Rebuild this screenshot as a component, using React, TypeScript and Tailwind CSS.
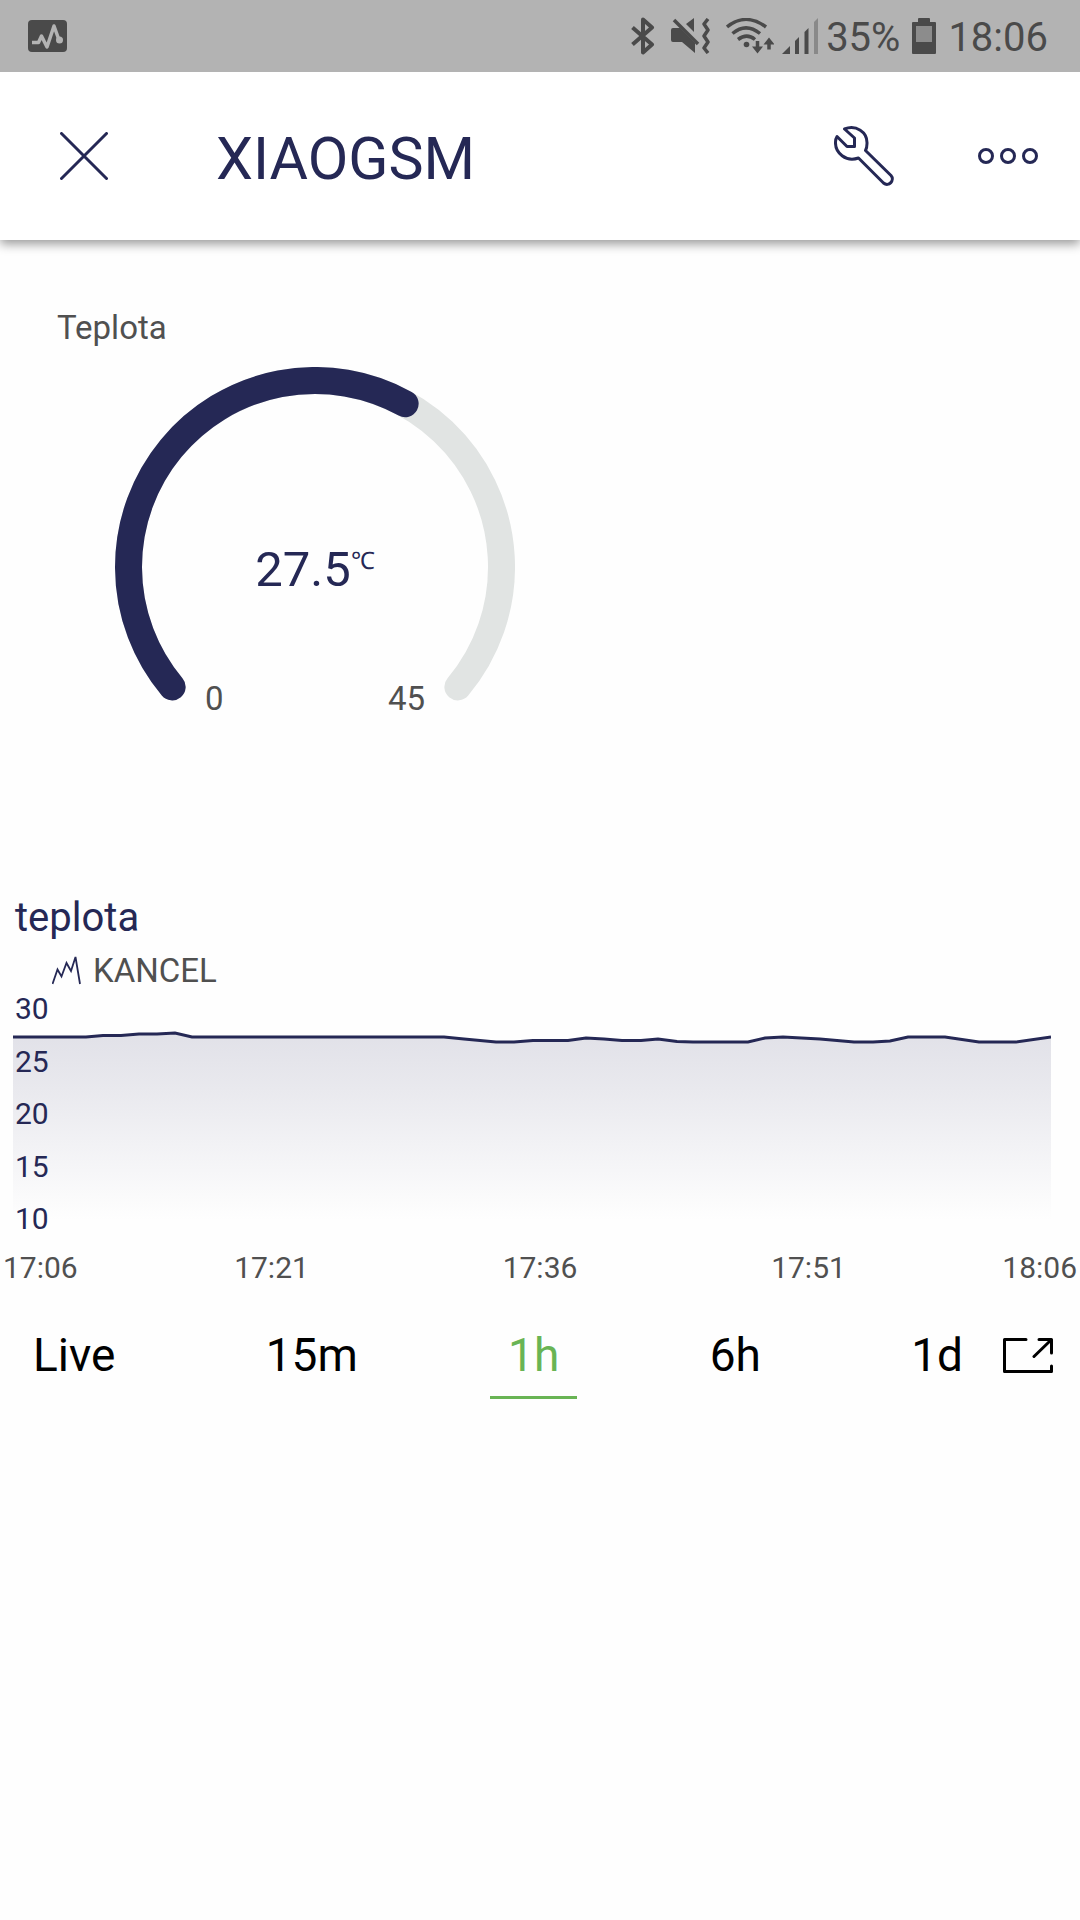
import { useState } from 'react';

const ranges = ['Live', '15m', '1h', '6h', '1d'];

const scale = [30, 25, 20, 15, 10];

// x, y pairs of the last hour of readings
const points = [
  [0, 46], [73, 46], [90, 44.6], [108, 44.6], [126, 43], [144, 43], [162, 42], [179, 46],
  [431, 46], [451, 48], [483, 51], [501, 51], [520, 49.5], [555, 49.5], [573, 47], [591, 48],
  [609, 49.5], [628, 49.5], [645, 48], [664, 50.5], [680, 51], [735, 51], [752, 47], [770, 46],
  [807, 48], [841, 51], [860, 51], [877, 50], [895, 46], [932, 46], [966, 51], [1003, 51],
  [1038, 46],
];

const line = points.map(([x, y]) => `${x},${y}`).join(' ');

const StatusBar = () => (
  <div className="relative z-10 flex h-[72px] items-center justify-between bg-[#b3b3b3] pl-7 pr-8 text-[#4a4a4a]">
    <svg className="h-8 w-[39px]" viewBox="0 0 39 32" fill="none">
      <rect width="39" height="32" rx="4" fill="currentColor" />
      <path d="M4 22.500h6.500l3-6.500 5.500 11 7-21 5 14" stroke="#b3b3b3" strokeWidth="3.500" strokeLinejoin="round" />
      <circle cx="31.500" cy="20" r="3.500" fill="#b3b3b3" />
    </svg>
    <div className="flex items-center">
      <svg className="h-[38px] w-6" viewBox="0 0 24 38" fill="none" stroke="currentColor" strokeWidth="4" strokeLinejoin="round">
        <path d="M1.500 10.500 21 27.500 12 35.500V2.500L21 10.500 1.500 27.500" />
      </svg>
      <svg className="ml-4 h-9 w-[39px]" viewBox="0 0 39 36" fill="currentColor">
        <path d="M2 10h7l15 15v10L11 24H2a2 2 0 0 1-2-2V12a2 2 0 0 1 2-2ZM15 6l8-6v14Z" />
        <path d="m3 2 24 24" fill="none" stroke="currentColor" strokeWidth="3.500" />
        <path d="m37 1-4 5 4 6-4 6 4 6-4 6 4 5" fill="none" stroke="currentColor" strokeWidth="3.500" strokeLinejoin="round" />
      </svg>
      <svg className="ml-4 h-9 w-12" viewBox="0 0 48 36" fill="none" stroke="currentColor" strokeWidth="3.500">
        <path d="M1 9C13-1 27-1 40 9M6.500 15.500c9-7.500 18-7.500 27.500 0M12 21.500c6-4.500 11.500-4.500 17 0" />
        <circle cx="20.500" cy="26.500" r="2.800" fill="currentColor" stroke="none" />
        <path d="M31.500 23v9M43 31.500V23" strokeWidth="3.500" />
        <path d="M26 28.500h11l-5.500 7ZM37.500 26.500h11l-5.500-7Z" fill="currentColor" stroke="none" />
      </svg>
      <svg className="ml-2 h-9 w-9" viewBox="0 0 36 36" fill="currentColor">
        <path d="M0 36 8 28v8ZM13 23l4-4v17h-4ZM22.500 14l4-4v26h-4Z" />
        <path d="m32 4 4-4v36h-4Z" opacity=".4" />
      </svg>
      <span className="ml-2 pt-1 text-[40px] leading-[48px]">35%</span>
      <svg className="ml-3 h-9 w-6" viewBox="0 0 24 36" fill="currentColor">
        <path d="M7 0h10a1 1 0 0 1 1 1v3h5a1 1 0 0 1 1 1v30a1 1 0 0 1-1 1H1a1 1 0 0 1-1-1V5a1 1 0 0 1 1-1h5V1a1 1 0 0 1 1-1Z" />
        <path d="M4 8h16v16H4Z" fill="#8c8c8c" />
      </svg>
      <span className="ml-3 pt-1 text-[40px] leading-[48px]">18:06</span>
    </div>
  </div>
);

const Header = () => (
  <header className="flex h-[168px] items-center bg-white pl-[60px] pr-10 text-[#252855] shadow-[0_4px_10px_rgba(0,0,0,0.4)]">
    <button type="button" aria-label="Close">
      <svg className="h-12 w-12" viewBox="0 0 48 48" fill="none" stroke="currentColor" strokeWidth="3" strokeLinecap="round">
        <path d="m1.500 1.500 45 45M46.500 1.500l-45 45" />
      </svg>
    </button>
    <h1 className="ml-[108px] flex-1 pt-[6px] text-[59px] leading-[72px]">XIAOGSM</h1>
    <button type="button" aria-label="Settings">
      <svg className="h-[60px] w-[60px]" viewBox="0 0 60 60" fill="none" stroke="currentColor" strokeWidth="3" strokeLinejoin="round">
        <path d="M10.500 3C22-1.500 33.500 6 33 17.500c0 2.500-.5 5-1.500 7L57 49.500c4 4.500-2 12-7.500 7.500L24.500 32C12 36.500 1 27 1.500 16c0-2 .5-4 1.500-5.500l10 10h7.500V12Z" />
      </svg>
    </button>
    <button type="button" aria-label="More" className="ml-[84px]">
      <svg className="h-[60px] w-[62px]" viewBox="0 0 62 60" fill="none" stroke="currentColor" strokeWidth="3">
        <circle cx="8" cy="30" r="6.500" />
        <circle cx="30" cy="30" r="6.500" />
        <circle cx="52" cy="30" r="6.500" />
      </svg>
    </button>
  </header>
);

const Gauge = () => (
  <section className="px-[57px] pt-[68px]">
    <h2 className="text-[33px] leading-10 text-[#505050]">Teplota</h2>
    <div className="ml-[58px] mt-[19px] grid h-[352px] w-[400px]">
      <svg className="[grid-area:1/1]" viewBox="0 0 400 352" fill="none" strokeWidth="27" strokeLinecap="round">
        <path d="M57.130 319.880A186.500 186.500 0 1 1 342.870 319.880" stroke="#e1e4e3" />
        <path d="M57.130 319.880A186.500 186.500 0 0 1 290.130 36.730" stroke="#252855" />
      </svg>
      <p className="flex items-start justify-center pt-[175px] text-[49px] leading-[56px] text-[#252855] [grid-area:1/1]">
        27.5<span className="text-[24px] leading-[38px]">℃</span>
      </p>
      <div className="flex justify-between self-end px-[90px] text-[33px] leading-10 text-[#505050] [grid-area:1/1]">
        <span>0</span>
        <span>45</span>
      </div>
    </div>
  </section>
);

const Chart = () => {
  const [range, setRange] = useState('1h');

  return (
    <section className="mt-[175px]">
      <h2 className="px-[15px] text-[40px] leading-[48px] text-[#252855]">teplota</h2>
      <div className="mt-[9px] flex items-center pl-[52px] text-[33px] leading-10 text-[#505050]">
        <svg className="mr-3 h-[30px] w-[29px]" viewBox="0 0 29 30" fill="none" stroke="#252855" strokeWidth="1.800">
          <path d="m.5 28 5-14.500 4 7L14.500 7l4.500 8L23.500 1 28 28" />
        </svg>
        KANCEL
      </div>
      <div className="grid h-[246px] pl-[13px] pr-[29px]">
        <svg className="h-full w-full [grid-area:1/1]" viewBox="0 0 1038 246" preserveAspectRatio="none">
          <defs>
            <linearGradient id="area" x1="0" y1="0" x2="0" y2="1">
              <stop offset="0" stopColor="#e1e1e8" />
              <stop offset="0.3" stopColor="#e9e9ee" />
              <stop offset="1" stopColor="#fefefe" />
            </linearGradient>
          </defs>
          <polygon points={`0,229 ${line} 1038,229`} fill="url(#area)" />
          <polyline points={line} fill="none" stroke="#252855" strokeWidth="3" />
        </svg>
        <div className="flex flex-col justify-between pl-[2px] text-[30px] leading-9 text-[#252855] [grid-area:1/1]">
          {scale.map((value) => (
            <span key={value}>{value}</span>
          ))}
        </div>
      </div>
      <div className="mt-[13px] grid grid-cols-[1fr_2fr_2fr_2fr_1fr] px-[3px] text-center text-[30px] leading-9 text-[#505050]">
        <span className="text-left">17:06</span>
        <span>17:21</span>
        <span>17:36</span>
        <span>17:51</span>
        <span className="text-right">18:06</span>
      </div>
      <div className="mt-[41px] flex items-start pl-[15px] pr-[27px] text-black">
        <div className="flex flex-1 justify-between">
          {ranges.map((item) => (
            <button
              key={item}
              type="button"
              onClick={() => setRange(item)}
              className={`border-b-3 px-[18px] pb-[13px] text-[46px] leading-[56px] ${
                item === range ? 'border-[#69b454] text-[#69b454]' : 'border-transparent'
              }`}
            >
              {item}
            </button>
          ))}
        </div>
        <button type="button" aria-label="Full screen" className="ml-[22px] pt-[11px]">
          <svg className="h-[35px] w-[50px]" viewBox="0 0 50 35" fill="none" stroke="currentColor" strokeWidth="3" strokeLinecap="round" strokeLinejoin="round">
            <path d="M23 1.500H1.500v32h47V28M36 1.500h12.500V15M48 2 31 18.500" />
          </svg>
        </button>
      </div>
    </section>
  );
};

const App = () => {
  return (
    <div className="min-h-screen bg-[#fefefe] font-[Roboto,sans-serif]">
      <StatusBar />
      <Header />
      <main>
        <Gauge />
        <Chart />
      </main>
    </div>
  );
};

export default App;
